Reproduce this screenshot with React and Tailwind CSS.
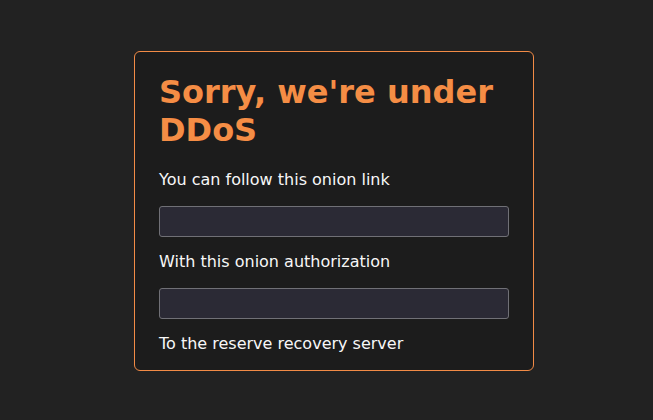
import React from "react";

const fields = [
  { label: "You can follow this onion link" },
  { label: "With this onion authorization" },
];

const App = () => {
  return (
    <div className="min-h-[420px] w-full bg-[#222222] flex items-start pl-[134px] pt-[51px] font-['DejaVu_Sans',sans-serif]">
      <div className="w-[400px] h-[320px] rounded-[6px] border border-[#f28b46] bg-[#1c1c1c] px-6 pt-[21px]">
        <h1 className="text-[32px] leading-[38px] font-bold text-[#f58d45]">
          Sorry, we're under DDoS
        </h1>
        {fields.map((f, i) => (
          <div key={i}>
            <p className={`${i === 0 ? "mt-[19px]" : "mt-[13px]"} text-[16px] leading-6 text-[#f7f7f7]`}>
              {f.label}
            </p>
            <div className="mt-[14px] h-[31px] rounded-[3px] border border-[#707076] bg-[#2b2a35]" />
          </div>
        ))}
        <p className="mt-[13px] text-[16px] leading-6 text-[#f7f7f7]">
          To the reserve recovery server
        </p>
      </div>
    </div>
  );
};

export default App;
